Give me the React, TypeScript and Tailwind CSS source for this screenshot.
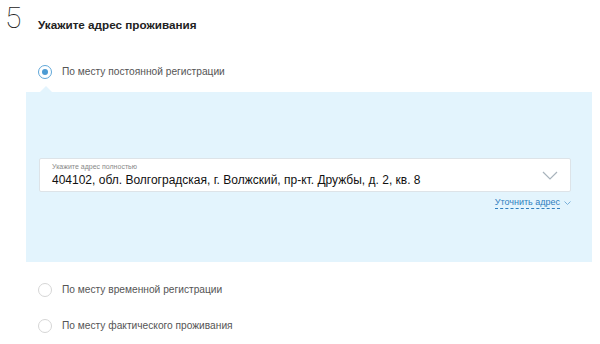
import React, { useState } from 'react';

const options = [
    'По месту постоянной регистрации',
    'По месту временной регистрации',
    'По месту фактического проживания',
];

const Radio = ({ checked }: { checked: boolean }) => (
    <span
        className={`flex h-[14px] w-[14px] shrink-0 items-center justify-center rounded-full border bg-white ${
            checked ? 'border-[#5fa7d9]' : 'border-[#d6d6d6]'
        }`}
    >
        {checked && <span className="h-[6px] w-[6px] rounded-full bg-[#4c9bd3]" />}
    </span>
);

export default function App() {
    const [selected, setSelected] = useState(0);

    return (
        <div className="h-[344px] w-[600px] overflow-hidden bg-white font-['Liberation_Sans',Arial,sans-serif]">
            <div className="flex items-start pl-[5px] pt-[3px]">
                <span className="w-[33px] font-['Roboto',sans-serif] text-[30px] font-thin leading-[30px] text-[#222]">5</span>
                <h2 className="pt-[15px] text-[11.7px] font-bold leading-[14px] text-[#222]">Укажите адрес проживания</h2>
            </div>

            <label className="ml-[38px] mt-[31px] flex cursor-pointer items-center gap-[10px]" onClick={() => setSelected(0)}>
                <Radio checked={selected === 0} />
                <span className="text-[10.2px] text-[#555]">{options[0]}</span>
            </label>

            <div className="relative ml-[26px] mr-[8px] mt-[13px] h-[170px] bg-[#e3f4fd] px-[13px] pt-[66px]">
                <span className="absolute left-[14px] top-[-6px] h-0 w-0 border-x-[6px] border-b-[6px] border-x-transparent border-b-[#e3f4fd]" />
                <div className="mr-[8px] flex h-[34px] items-center rounded-[2px] border border-[#dde3e8] bg-white pl-[12px] pr-[12px]">
                    <div className="flex-1">
                        <div className="text-[7px] leading-[8px] text-[#888]">Укажите адрес полностью</div>
                        <div className="mt-[2px] text-[12px] leading-[15px] text-[#111]">
                            404102, обл. Волгоградская, г. Волжский, пр-кт. Дружбы, д. 2, кв. 8
                        </div>
                    </div>
                    <svg width="16" height="9" viewBox="0 0 16 9" fill="none">
                        <path d="M1 1l7 7 7-7" stroke="#a8b3bc" strokeWidth="1.2" />
                    </svg>
                </div>
                <div className="mr-[8px] mt-[4px] flex items-center justify-end gap-[4px]">
                    <span className="border-b border-dashed border-[#2f7fbf] text-[9px] leading-[12px] text-[#2f7fbf]">Уточнить адрес</span>
                    <svg width="7" height="4" viewBox="0 0 7 4" fill="none">
                        <path d="M0.5 0.5l3 3 3-3" stroke="#6fa9d6" strokeWidth="0.9" />
                    </svg>
                </div>
            </div>

            <div className="ml-[38px] mt-[21px] flex flex-col gap-[22px]">
                {options.slice(1).map((o, i) => (
                    <label key={o} className="flex cursor-pointer items-center gap-[10px]" onClick={() => setSelected(i + 1)}>
                        <Radio checked={selected === i + 1} />
                        <span className="text-[10.2px] leading-[14px] text-[#555]">{o}</span>
                    </label>
                ))}
            </div>
        </div>
    );
}
